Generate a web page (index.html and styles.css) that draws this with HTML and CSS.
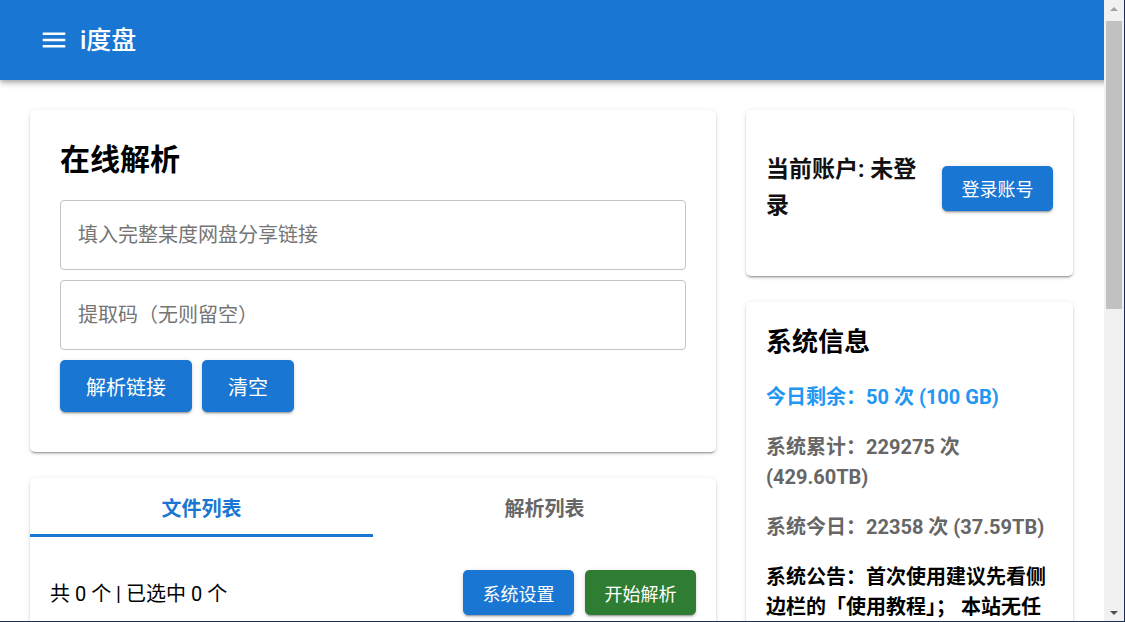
FILE: index.html
```html
<!DOCTYPE html>
<html lang="zh-CN">
<head>
<meta charset="utf-8">
<title>i度盘</title>
<link rel="stylesheet" href="styles.css">
</head>
<body>
<header class="appbar">
  <button class="menu-btn" aria-label="menu">
    <svg viewBox="0 0 24 24" width="30" height="30"><path fill="#fff" d="M3 18h18v-2H3v2zm0-5h18v-2H3v2zm0-7v2h18V6H3z"/></svg>
  </button>
  <div class="brand">i度盘</div>
</header>
<main class="main">
  <section class="left-col">
    <div class="card parse-card">
      <h2 class="card-title">在线解析</h2>
      <div class="field"><input class="text-input" type="text" placeholder="填入完整某度网盘分享链接"></div>
      <div class="field"><input class="text-input" type="text" placeholder="提取码（无则留空）"></div>
      <div class="btn-row">
        <button class="btn btn-primary btn-lg">解析链接</button>
        <button class="btn btn-primary btn-lg">清空</button>
      </div>
    </div>
    <div class="card list-card">
      <div class="tabs">
        <div class="tab tab-active">文件列表</div>
        <div class="tab">解析列表</div>
      </div>
      <div class="list-toolbar">
        <div class="count">共 0 个 | 已选中 0 个</div>
        <div class="toolbar-btns">
          <button class="btn btn-primary btn-md">系统设置</button>
          <button class="btn btn-green btn-md">开始解析</button>
        </div>
      </div>
    </div>
  </section>
  <aside class="right-col">
    <div class="card account-card">
      <div class="account-text">当前账户: 未登录</div>
      <button class="btn btn-primary btn-md">登录账号</button>
    </div>
    <div class="card info-card">
      <h3 class="info-title">系统信息</h3>
      <p class="info-line info-blue">今日剩余：50 次 (100 GB)</p>
      <p class="info-line info-gray">系统累计：229275 次 (429.60TB)</p>
      <p class="info-line info-gray">系统今日：22358 次 (37.59TB)</p>
      <p class="info-line info-dark">系统公告：首次使用建议先看侧边栏的「使用教程」； 本站无任何收费项目，请勿相信任何付费信息，谨防上当受骗。</p>
    </div>
  </aside>
</main>
<div class="scrollbar" aria-hidden="true">
  <div class="sb-arrow sb-up"></div>
  <div class="sb-track"><div class="sb-thumb"></div></div>
  <div class="sb-arrow sb-down"></div>
</div>
<div class="frame" aria-hidden="true"></div>
</body>
</html>
```
FILE: styles.css
```css
* { box-sizing: border-box; }
html, body { margin: 0; padding: 0; }
body {
  background: #fff;
  font-family: Roboto, "Noto Sans CJK SC", sans-serif;
  color: rgba(0,0,0,.87);
}
.appbar {
  position: relative;
  z-index: 2;
  height: 80px;
  background: #1976d2;
  display: flex;
  align-items: center;
  padding-left: 39px;
  box-shadow: 0 2px 4px -1px rgba(0,0,0,.2), 0 4px 5px 0 rgba(0,0,0,.14), 0 1px 10px 0 rgba(0,0,0,.12);
}
.menu-btn {
  background: none;
  border: 0;
  padding: 0;
  width: 30px;
  height: 30px;
  display: flex;
}
.brand {
  color: #fff;
  font-size: 25px;
  font-weight: 500;
  margin-left: 11px;
  line-height: 1;
}
.main {
  display: flex;
  align-items: flex-start;
  gap: 30px;
  padding: 30px 0 40px 30px;
  min-height: 1177px;
}
.left-col { width: 686px; display: flex; flex-direction: column; gap: 26px; }
.right-col { width: 327px; display: flex; flex-direction: column; gap: 26px; }
.card {
  background: #fff;
  border-radius: 5px;
  box-shadow: 0 3px 1px -2px rgba(0,0,0,.2), 0 2px 2px 0 rgba(0,0,0,.14), 0 1px 5px 0 rgba(0,0,0,.12);
}
.parse-card { padding: 30px 30px 40px; }
.card-title {
  margin: 0 0 20px;
  font-size: 30px;
  line-height: 40px;
  font-weight: 700;
  color: #000;
}
.field { margin-bottom: 10px; }
.text-input {
  width: 100%;
  height: 70px;
  border: 1px solid #c4c4c4;
  border-radius: 4px;
  padding: 0 17px;
  font-family: inherit;
  font-size: 20px;
  color: rgba(0,0,0,.87);
  outline: none;
}
.text-input::placeholder { color: #757575; }
.btn-row { display: flex; gap: 10px; }
.btn {
  border: 0;
  border-radius: 5px;
  color: #fff;
  font-family: inherit;
  cursor: pointer;
  box-shadow: 0 3px 1px -2px rgba(0,0,0,.2), 0 2px 2px 0 rgba(0,0,0,.14), 0 1px 5px 0 rgba(0,0,0,.12);
}
.btn-primary { background: #1976d2; }
.btn-green { background: #2e7d32; }
.btn-lg { height: 52px; padding: 0 26px; font-size: 20px; }
.btn-md { height: 45px; padding: 0 19.5px; font-size: 18px; }
.list-card { padding-bottom: 20px; }
.tabs { display: flex; height: 59px; }
.tab {
  flex: 1;
  display: flex;
  align-items: center;
  justify-content: center;
  font-size: 20px;
  font-weight: 700;
  color: #666;
  border-bottom: 3px solid transparent;
  padding-top: 3px;
}
.tab-active { color: #1976d2; border-bottom-color: #1976d2; }
.list-toolbar {
  display: flex;
  align-items: center;
  justify-content: space-between;
  padding: 33px 20px 0;
}
.count { font-size: 20px; color: #000; }
.toolbar-btns { display: flex; gap: 11px; }
.account-card {
  display: flex;
  align-items: center;
  gap: 20px;
  padding: 42px 20px 52px;
}
.account-text {
  flex: 1;
  font-size: 23px;
  line-height: 36px;
  font-weight: 700;
  color: #111;
}
.info-card { padding: 20px 20px 30px; }
.info-title {
  margin: 0;
  font-size: 26px;
  line-height: 40px;
  font-weight: 700;
  color: #000;
}
.info-line {
  margin: 20px 0 0;
  font-size: 20px;
  line-height: 30px;
  font-weight: 700;
}
.info-blue { color: #2196f3; }
.info-gray { color: #666; }
.info-dark { color: #000; }

/* imitation of the window's classic scrollbar and frame */
.scrollbar {
  position: fixed;
  top: 0;
  right: 1px;
  bottom: 1px;
  width: 20px;
  z-index: 10;
  background: #f1f1f1;
  display: flex;
  flex-direction: column;
}
.sb-arrow { height: 17px; display: flex; align-items: center; justify-content: center; }
.sb-up::before {
  content: "";
  border-left: 4.5px solid transparent;
  border-right: 4.5px solid transparent;
  border-bottom: 4.5px solid #a3a3a3;
}
.sb-down::before {
  content: "";
  border-left: 4.5px solid transparent;
  border-right: 4.5px solid transparent;
  border-top: 4.5px solid #505050;
}
.sb-track { flex: 1; padding: 4px 2px 0 2px; }
.sb-thumb { height: 288px; background: #c1c1c1; }
.frame {
  position: fixed;
  inset: 0;
  z-index: 11;
  border-right: 1px solid #1c2f52;
  border-bottom: 1px solid #1c2f52;
  pointer-events: none;
}
```
